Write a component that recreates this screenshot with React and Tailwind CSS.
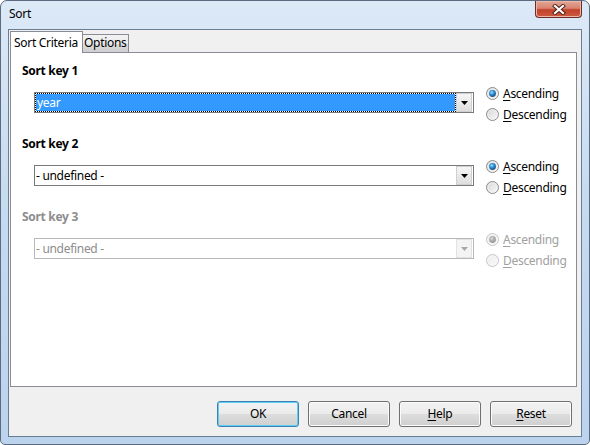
import { useId } from "react";

const font = "font-['Noto_Sans','Open_Sans',sans-serif]";
const btnBg =
  "bg-[linear-gradient(#f2f2f2_0%,#ebebeb_50%,#dddddd_51%,#cfcfcf_100%)]";

export default function App() {
  return (
    <div
      className={`${font} flex h-[445px] w-[590px] flex-col rounded-t-[7px] rounded-b-[5px] border border-[#5c6b80] bg-[linear-gradient(180deg,#dce9f7,#c6daf0_45%,#bcd3ee)] px-[7px] pb-[7px] text-[12px] tracking-[-0.3px] text-black`}
    >
      {/* Title bar */}
      <div className="flex h-[28px] items-start justify-between">
        <span className="ml-[1px] pt-[5px] leading-[16px]">Sort</span>
        <CloseButton />
      </div>

      {/* Client area */}
      <div className="flex flex-1 flex-col border border-[#6b7d93] bg-[#f0f0f0] pl-[1px] pt-[1px]">
        {/* Tabs */}
        <div className="flex h-[21px] items-start">
          <div className="relative z-10 -mb-px h-[22px] w-[73px] border border-b-0 border-[#898c95] bg-white pl-[3px] pt-[3px] leading-[16px]">
            Sort Criteria
          </div>
          <div className={`mt-[3px] h-[18px] w-[46px] border-r border-t border-[#898c95] ${btnBg} pl-[1px] leading-[16px]`}>
            Options
          </div>
        </div>

        {/* Panel */}
        <div className="mr-[4px] flex flex-1 flex-col border border-[#898c95] bg-white pl-[11px] pt-[10px]">
          <SortKey title="Sort key 1" value="year" focused />
          <SortKey title="Sort key 2" value="- undefined -" />
          <SortKey title="Sort key 3" value="- undefined -" disabled />
        </div>

        {/* Buttons */}
        <div className="flex h-[49px] justify-end gap-[9px] pr-[9px] pt-[14px]">
          <Button primary>OK</Button>
          <Button>Cancel</Button>
          <Button>
            <span className="underline underline-offset-[2px]">H</span>elp
          </Button>
          <Button>
            <span className="underline underline-offset-[2px]">R</span>eset
          </Button>
        </div>
      </div>
    </div>
  );
}

function SortKey({ title, value, focused, disabled }) {
  const muted = disabled ? "text-[#8d8d8d]" : "text-black";
  return (
    <div className="h-[73px]">
      <div className={`font-bold leading-[16px] ${muted}`}>{title}</div>
      <div className="mt-[4px] flex items-start">
        <Combo value={value} focused={focused} disabled={disabled} />
        <div className="ml-[12px] flex flex-col">
          <RadioRow label="scending" letter="A" checked disabled={disabled} />
          <RadioRow label="escending" letter="D" disabled={disabled} />
        </div>
      </div>
    </div>
  );
}

function Combo({ value, focused, disabled }) {
  return (
    <div
      className={`ml-[12px] mt-[9px] flex h-[21px] w-[440px] border bg-white ${
        disabled ? "border-[#b8b8b8]" : "border-[#7a7a7a]"
      }`}
    >
      {focused ? (
        <div className="flex w-[421px] items-center border border-dotted border-black bg-[#3399ff] bg-clip-padding pl-[1px] leading-[16px] text-white">
          {value}
        </div>
      ) : (
        <div
          className={`flex w-[421px] items-center pl-[1px] leading-[16px] ${
            disabled ? "text-[#8d8d8d]" : "text-black"
          }`}
        >
          {value}
        </div>
      )}
      <div
        className={`flex w-[16px] items-center justify-center border ${
          disabled
            ? "border-[#e2e2e2] bg-[#f4f4f4]"
            : "border-[#cfcfcf] bg-[linear-gradient(#f6f6f6,#dedede)]"
        }`}
      >
        <svg width="7" height="4" viewBox="0 0 7 4">
          <path d="M0 0h7L3.5 4z" fill={disabled ? "#a8a8a8" : "#000"} />
        </svg>
      </div>
    </div>
  );
}

function RadioRow({ label, letter, checked, disabled }) {
  return (
    <div
      className={`flex h-[21px] items-center gap-[4px] leading-[16px] ${
        disabled ? "text-[#a0a0a0]" : "text-black"
      }`}
    >
      <Radio checked={checked} disabled={disabled} />
      <span>
        <span className="underline underline-offset-[2px]">{letter}</span>
        {label}
      </span>
    </div>
  );
}

function Radio({ checked, disabled }) {
  const id = useId().replace(/:/g, "");
  return (
    <svg width="13" height="13" viewBox="0 0 13 13" className="shrink-0">
      <defs>
        <linearGradient id={`f${id}`} x1="0" y1="0" x2="1" y2="1">
          <stop offset="0" stopColor={disabled ? "#ececec" : "#d4d4d4"} />
          <stop offset="1" stopColor={disabled ? "#fafafa" : "#fcfcfc"} />
        </linearGradient>
        <radialGradient id={`d${id}`} cx="0.4" cy="0.35" r="0.75">
          <stop offset="0" stopColor={disabled ? "#dadada" : "#9be4ff"} />
          <stop offset="0.45" stopColor={disabled ? "#b0b0b0" : "#2a8bd0"} />
          <stop offset="1" stopColor={disabled ? "#8c8c8c" : "#0c3c6c"} />
        </radialGradient>
      </defs>
      <circle
        cx="6.5"
        cy="6.5"
        r="6"
        fill={`url(#f${id})`}
        stroke={disabled ? "#c6c6c6" : "#8a8a8a"}
      />
      <circle cx="6.5" cy="6.5" r="4.6" fill="none" stroke={disabled ? "#f6f6f6" : "#f0f0f0"} strokeWidth="0.8" />
      {checked && <circle cx="6.5" cy="6.5" r="3.4" fill={`url(#d${id})`} />}
    </svg>
  );
}

function Button({ children, primary }) {
  return (
    <button
      className={`h-[26px] w-[82px] rounded-[3px] border ${btnBg} leading-[16px] ${
        primary
          ? "border-[#3c7fb1] shadow-[inset_0_0_0_1px_#5fd0f5]"
          : "border-[#707070] shadow-[inset_0_0_0_1px_#fbfbfb]"
      }`}
    >
      {children}
    </button>
  );
}

function CloseButton() {
  return (
    <div className="flex h-[17px] w-[47px] items-center justify-center rounded-b-[4px] border border-t-0 border-[#6e2c24] bg-[linear-gradient(#e3a696_0%,#d88470_45%,#c2412a_55%,#cd5a40_100%)] shadow-[inset_0_0_0_1px_#eab7ab]">
      <svg width="14" height="11" viewBox="0 0 14 11">
        <path d="M3 2l8 7M11 2l-8 7" stroke="#4a2018" strokeWidth="4" strokeLinecap="square" />
        <path d="M3 2l8 7M11 2l-8 7" stroke="#fff" strokeWidth="2.2" strokeLinecap="square" />
      </svg>
    </div>
  );
}
